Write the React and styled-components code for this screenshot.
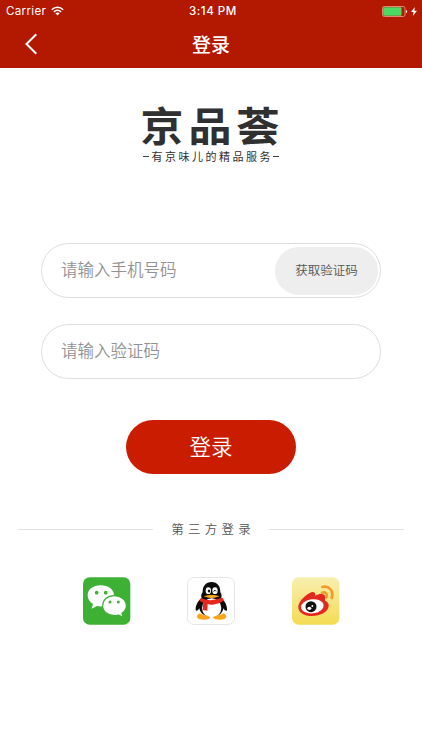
import React, { useState } from "react";
import styled, { createGlobalStyle } from "styled-components";

const GlobalStyle = createGlobalStyle`
	* {
		box-sizing: border-box;
	}

	body {
		margin: 0;
		background-color: #fff;
		font-family: "Noto Sans CJK SC", sans-serif;
	}

	button,
	input {
		font-family: inherit;
		border: 0;
		outline: 0;
		padding: 0;
	}
`;
const Page = styled.div`
	height: 750px;
	display: flex;
	flex-direction: column;
	align-items: center;
	overflow: hidden;
`;
const Header = styled.header`
	width: 100%;
	height: 68px;
	flex-shrink: 0;
	color: #fff;
	background-color: #b31800;
`;
const StatusBar = styled.div`
	height: 22px;
	padding: 0 5px 0 6px;
	display: grid;
	grid-template-columns: 1fr auto 1fr;
	align-items: center;
	font-family: Inter, sans-serif;
	font-size: 11.6px;
	line-height: 22px;
	letter-spacing: 0.3px;
`;
const StatusGroup = styled.div`
	display: flex;
	align-items: center;
	justify-content: ${(props) => (props.$end ? "flex-end" : "flex-start")};
	gap: ${(props) => (props.$end ? "3px" : "5px")};
`;
const Time = styled.span`
	font-weight: 500;
	letter-spacing: 0.5px;
	padding-left: 3px;
`;
const NavBar = styled.div`
	height: 44px;
	padding: 0 24px;
	display: grid;
	grid-template-columns: 1fr auto 1fr;
	align-items: center;
`;
const BackButton = styled.button`
	width: 14px;
	height: 22px;
	display: flex;
	background: none;
	color: inherit;
`;
const Title = styled.h1`
	margin: 0;
	font-size: 19px;
	font-weight: 500;
	line-height: 42px;
`;
const Logo = styled.div`
	margin-top: 32px;
	height: 143px;
	color: #303030;
	text-align: center;
	white-space: nowrap;
`;
const LogoName = styled.div`
	font-size: 43px;
	font-weight: 700;
	line-height: 46px;
	letter-spacing: 5px;
	margin: 0 -4px 0 -1px;
	transform: scaleY(0.93);
`;
const Tagline = styled.div`
	display: flex;
	align-items: center;
	justify-content: center;
	gap: 2.5px;
	margin-top: 2px;
	font-size: 11px;
	font-weight: 400;
	line-height: 16px;
	letter-spacing: 2.5px;

	span {
		margin-right: -2.5px;
	}

	&::before,
	&::after {
		content: "";
		width: 6px;
		height: 1px;
		background-color: #444;
	}
`;
const Form = styled.form`
	display: flex;
	flex-direction: column;
	align-items: center;
`;
const Field = styled.div`
	width: 340px;
	height: 55px;
	margin-bottom: ${(props) => (props.$last ? "41px" : "26px")};
	padding: 0 2px 0 19px;
	display: flex;
	align-items: center;
	border: 1px solid #dedede;
	border-radius: 28px;
`;
const Input = styled.input`
	width: 1px;
	flex-grow: 1;
	height: 40px;
	padding-bottom: 3px;
	background: none;
	color: #333;
	font-size: 16.5px;
	font-weight: 350;

	&::placeholder {
		color: #929292;
		opacity: 1;
	}
`;
const CodeButton = styled.button`
	width: 103px;
	height: 48px;
	border-radius: 24px;
	background-color: #eee;
	color: #555;
	font-size: 12.5px;
	font-weight: 350;
	line-height: 46px;
	padding-bottom: 2px;
`;
const LoginButton = styled.button`
	width: 170px;
	height: 54px;
	padding-bottom: 2px;
	border-radius: 27px;
	background-color: #ca1c00;
	color: #fff;
	font-size: 21.5px;
	font-weight: 350;
	line-height: 52px;
`;
const Divider = styled.div`
	width: 386px;
	margin-top: 45px;
	display: flex;
	align-items: center;
	gap: 18px;
	color: #555;
	font-size: 12.5px;
	font-weight: 350;
	line-height: 20px;
	letter-spacing: 4.2px;
	white-space: nowrap;

	span {
		margin-right: -4.2px;
	}

	&::before,
	&::after {
		content: "";
		flex: 1;
		height: 1px;
		background-color: #e2e2e2;
	}
`;
const SocialRow = styled.div`
	margin-top: 38px;
	display: flex;
	gap: 56.5px;
`;
const SocialButton = styled.button`
	width: 48px;
	height: 48px;
	display: flex;
	background: none;
`;

const WifiIcon = () => (
	<svg width="13" height="10" viewBox="0 0 13 10" fill="none" stroke="#fff" strokeWidth="1.6">
		<path d="M0.8 3.7 C4 0.5 9 0.5 12.2 3.7" />
		<path d="M2.9 5.9 C5 3.9 8 3.9 10.1 5.9" />
		<path d="M4.4 7.3 C5.6 6.3 7.4 6.3 8.6 7.3 L6.5 9.5 Z" fill="#fff" stroke="none" />
	</svg>
);

const BatteryIcon = () => (
	<svg width="26" height="11" viewBox="0 0 26 11">
		<rect x="0.5" y="0.5" width="22.5" height="10" rx="1.8" fill="none" stroke="#e08b78" />
		<rect x="1.2" y="1.2" width="18.3" height="8.6" rx="1" fill="#4cd964" />
		<path d="M24 3.7 Q26.2 5.5 24 7.3 Z" fill="#fff" />
	</svg>
);

const BoltIcon = () => (
	<svg width="6" height="9" viewBox="0 0 6 9">
		<path d="M3.8 0 L0 5 H2.5 L1.8 9 L6 3.7 H3.4 Z" fill="#fff" />
	</svg>
);

const BackIcon = () => (
	<svg width="14" height="22" viewBox="0 0 14 22">
		<path d="M12.3 1.2 L2.5 11 L12.3 20.8" fill="none" stroke="#fff" strokeWidth="2" />
	</svg>
);

const WechatIcon = () => (
	<svg width="48" height="48" viewBox="0 0 144 144">
		<rect x="0" y="1" width="142" height="142" rx="20" fill="#3eb135" />
		<path
			d="M53 25 C30 25 14 38 14 55 C14 66 20 75 30 81 L26 95 L42 87 C49 89 57 89 63 87 C82 84 93 70 93 55 C93 37 75 25 53 25 Z"
			fill="#fff"
		/>
		<path
			d="M94 56 C73 56 59 69 59 86 C59 103 74 116 94 116 Q100 116 106 114 L120 121 L117 109 C125 103 130 95 130 86 C130 69 114 56 94 56 Z"
			fill="#fff"
			stroke="#3eb135"
			strokeWidth="3.5"
		/>
		<g fill="#3eb135">
			<circle cx="41" cy="47" r="5.5" />
			<circle cx="68" cy="47" r="5.5" />
			<circle cx="81" cy="75" r="4.5" />
			<circle cx="106" cy="75" r="4.5" />
		</g>
	</svg>
);

const QqIcon = () => (
	<svg width="48" height="48" viewBox="0 0 144 144">
		<rect x="1.5" y="1.5" width="141" height="141" rx="20" fill="#fff" stroke="#dedede" strokeWidth="2.4" />
		<path
			d="M74 15 C56 15 46 28 47 46 C43 51 41 57 44 63 C32 72 25 86 26 100 C29 104 34 99 37 94 C39 108 52 119 74 119 C96 119 107 108 109 94 C112 100 117 104 120 100 C121 86 114 72 102 63 C105 57 104 51 100 46 C101 28 91 15 74 15 Z"
			fill="#0b0b0b"
		/>
		<ellipse cx="74" cy="93" rx="29" ry="29" fill="#fff" />
		<g fill="#f7a51c">
			<path d="M39 109 C29 112 26 124 38 127 C50 129 65 128 70 122 C65 114 51 118 39 109 Z" />
			<path d="M109 109 C119 112 122 124 110 127 C98 129 83 128 78 122 C83 114 97 118 109 109 Z" />
		</g>
		<path d="M42 63 Q74 77 105 61 L111 70 Q99 81 76 83 Q70 84 62 81 L61 101 L47 99 L49 77 L37 71 Z" fill="#e52720" />
		<ellipse cx="64" cy="41" rx="8" ry="10" fill="#fff" />
		<ellipse cx="84" cy="41" rx="8" ry="10" fill="#fff" />
		<ellipse cx="66" cy="42" rx="3.7" ry="4.5" fill="#111" />
		<path d="M80 44 Q83 35 87 43" fill="none" stroke="#111" strokeWidth="3" />
		<path d="M50 58 Q74 48 98 58 Q74 69 50 58 Z" fill="#f7a51c" />
	</svg>
);

const WeiboIcon = () => (
	<svg width="48" height="48" viewBox="0 0 144 144">
		<defs>
			<linearGradient id="weiboBg" x1="0" y1="0" x2="0" y2="1">
				<stop offset="0" stopColor="#f8efb0" />
				<stop offset="1" stopColor="#f5dc53" />
			</linearGradient>
		</defs>
		<rect x="0" y="1" width="142" height="142" rx="20" fill="url(#weiboBg)" />
		<path
			d="M52 49 C63 41 72 45 69 56 C81 50 95 48 99 57 C101 62 98 67 99 71 C106 73 111 79 110 88 C108 105 86 117 60 117 C37 117 20 107 19 92 C18 77 34 59 52 49 Z"
			fill="#e32820"
		/>
		<ellipse cx="61" cy="88" rx="34" ry="21" fill="#fff" transform="rotate(-6 61 88)" />
		<circle cx="57" cy="89" r="16.5" fill="#111" />
		<ellipse cx="52" cy="94" rx="6" ry="5" fill="#fff" />
		<circle cx="61" cy="87" r="2.8" fill="#fff" />
		<g fill="none" stroke="#f29a2b" strokeWidth="8" strokeLinecap="round">
			<path d="M91 30 C111 25 126 42 119 63" />
			<path d="M90 47 C101 43 107 51 103 61" />
		</g>
	</svg>
);

const socials = [
	{ name: "微信", Icon: WechatIcon },
	{ name: "QQ", Icon: QqIcon },
	{ name: "微博", Icon: WeiboIcon },
];

const App = () => {
	const [phone, setPhone] = useState("");
	const [code, setCode] = useState("");

	return (
		<Page>
			<GlobalStyle />

			<Header>
				<StatusBar>
					<StatusGroup>
						<span>Carrier</span>
						<WifiIcon />
					</StatusGroup>
					<Time>3:14 PM</Time>
					<StatusGroup $end>
						<BatteryIcon />
						<BoltIcon />
					</StatusGroup>
				</StatusBar>

				<NavBar>
					<BackButton type="button">
						<BackIcon />
					</BackButton>
					<Title>登录</Title>
				</NavBar>
			</Header>

			<Logo>
				<LogoName>京品荟</LogoName>
				<Tagline>
					<span>有京味儿的精品服务</span>
				</Tagline>
			</Logo>

			<Form onSubmit={(e) => e.preventDefault()}>
				<Field>
					<Input placeholder="请输入手机号码" value={phone} onChange={(e) => setPhone(e.target.value)} />
					<CodeButton type="button">获取验证码</CodeButton>
				</Field>
				<Field $last>
					<Input placeholder="请输入验证码" value={code} onChange={(e) => setCode(e.target.value)} />
				</Field>
				<LoginButton type="submit">登录</LoginButton>
			</Form>

			<Divider>
				<span>第三方登录</span>
			</Divider>

			<SocialRow>
				{socials.map(({ name, Icon }) => (
					<SocialButton key={name} type="button">
						<Icon />
					</SocialButton>
				))}
			</SocialRow>
		</Page>
	);
};

export default App;
